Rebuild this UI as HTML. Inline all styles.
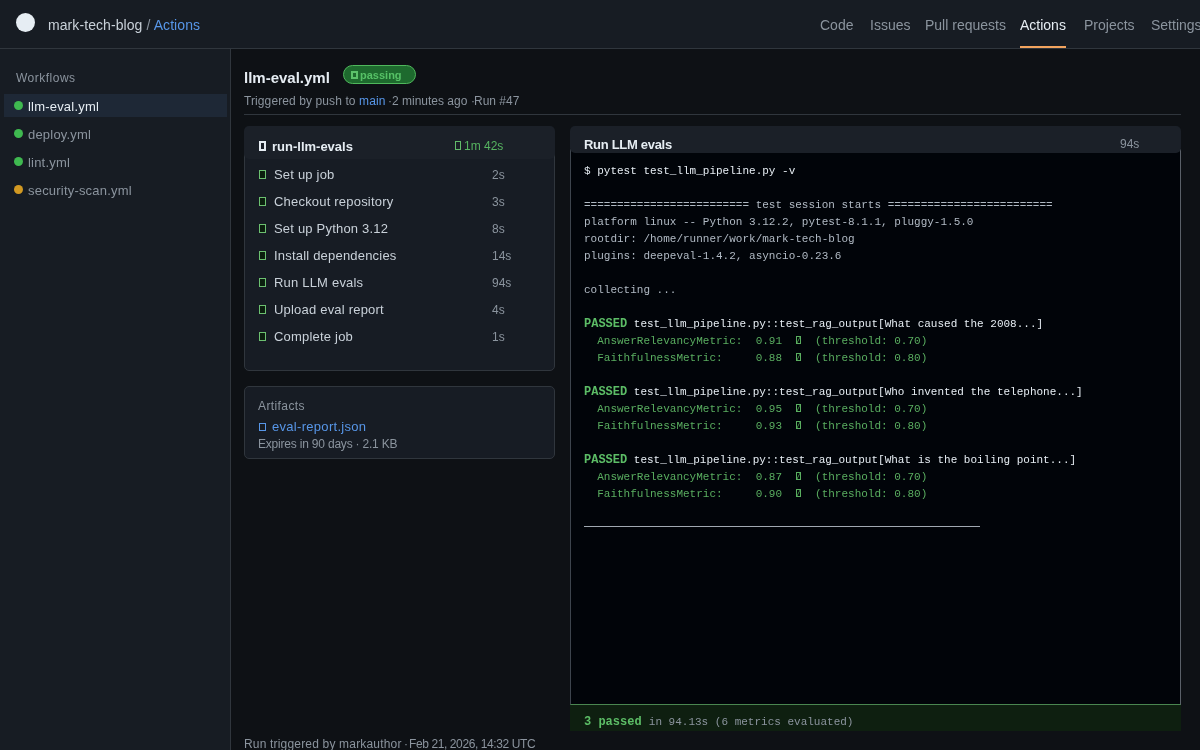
<!DOCTYPE html>
<html><head><meta charset="utf-8">
<style>
*{margin:0;padding:0;box-sizing:border-box}
html,body{width:1200px;height:750px;overflow:hidden;background:#0e1115;font-family:"Liberation Sans",sans-serif;color:#c9d1d9}
.hdr{position:absolute;left:0;top:0;width:1200px;height:49px;background:#171c23;border-bottom:1px solid #30363d}
.logo{position:absolute;left:16px;top:13px;width:19px;height:19px;border-radius:50%;background:#e6edf3}
.repo{position:absolute;left:48px;top:17px;font-size:14px;line-height:16px;color:#c9d1d9;white-space:nowrap;letter-spacing:0.08px}
.repo .s{color:#8b949e}
.repo .b{color:#5796e8}
.nav{position:absolute;top:17px;font-size:14px;line-height:16px;color:#8b949e;white-space:nowrap}
.nav.on{color:#e6edf3}
.uline{position:absolute;left:1020px;top:46px;width:46px;height:2px;background:#f2a35e}
.side{position:absolute;left:0;top:49px;width:231px;height:701px;background:#171c23;border-right:1px solid #30363d}
.wf{position:absolute;left:16px;top:22px;font-size:12px;line-height:14px;color:#8b949e;letter-spacing:0.5px}
.sel{position:absolute;left:4px;top:45px;width:223px;height:23px;background:#1e2836;border-radius:0}
.item{position:absolute;left:28px;margin-top:1px;font-size:13px;line-height:15px;color:#8b949e;white-space:nowrap;letter-spacing:0.2px}
.item.on{color:#e6edf3}
.dot{position:absolute;left:14px;width:9px;height:9px;border-radius:50%}
.g{background:#3fb950}.y{background:#d29922}
.title{position:absolute;left:244px;top:69px;font-size:15px;line-height:17px;font-weight:bold;color:#e6edf3;white-space:nowrap}
.badge{position:absolute;left:343px;top:65px;width:73px;height:19px;border-radius:10px;background:#1e6a2e;border:1px solid #4fb85c;color:#56c166;font-size:11px;font-weight:bold;line-height:17px;white-space:nowrap}
.sub{position:absolute;left:244px;top:94px;font-size:12px;line-height:14px;color:#8b949e;white-space:nowrap}
.hr{position:absolute;left:244px;top:114px;width:937px;height:1px;background:#30363d}
.card{position:absolute;background:#171c24;border:1px solid #30363d;border-radius:5px}
.chead{position:absolute;left:244px;top:126px;width:311px;height:33px;background:#1b2028;border-radius:5px}
.tofu{position:absolute;border:1px solid currentColor}
.jt{position:absolute;left:272px;top:139px;font-size:13px;line-height:15px;font-weight:bold;color:#e6edf3;white-space:nowrap}
.jd{position:absolute;left:464px;top:139px;font-size:12px;line-height:14px;color:#56b360;white-space:nowrap}
.step{position:absolute;left:274px;font-size:13px;line-height:15px;color:#c9d1d9;white-space:nowrap;letter-spacing:0.2px}
.dur{position:absolute;left:492px;font-size:12px;line-height:14px;color:#8b949e;white-space:nowrap}
.st{position:absolute;left:259px;width:7px;height:9px;border:1px solid #6cc070;background:#0b1f0e}
.term{position:absolute;left:570px;top:126px;width:611px;height:605px}
.thead{position:absolute;left:0;top:0;width:611px;height:27px;background:#1b2028;border-radius:5px;z-index:2}
.tbody{position:absolute;left:0;top:23px;width:611px;height:556px;background:#010409;border-left:1px solid #3d444d;border-right:1px solid #5a6068;border-bottom:1px solid #4a8650}
.tfoot{position:absolute;left:0;top:579px;width:611px;height:26px;background:#0e1f10}
.ttl{position:absolute;left:14px;top:11px;font-size:13px;line-height:15px;font-weight:bold;color:#e6edf3;white-space:nowrap;letter-spacing:-0.3px}
.tdur{position:absolute;left:550px;top:11px;font-size:12px;line-height:14px;color:#8b949e;white-space:nowrap}
.ln{position:absolute;left:13px;line-height:17px;font-family:"Liberation Mono",monospace;font-size:11px;white-space:pre;color:#b1bac4}
.ln.w{color:#e6edf3}
.ln.m{color:#5aae60}
.pb{font-weight:bold;color:#5cbd66;font-size:12px;line-height:0}
.tt{display:inline-block;width:6.6px;height:8px;position:relative;vertical-align:baseline}
.tt:before{content:"";position:absolute;left:1px;top:0;width:5px;height:8px;border:1px solid #5aae60;box-sizing:border-box;background:linear-gradient(to bottom right,transparent 35%,#2f6a35 45%,#2f6a35 55%,transparent 65%)}
.fl{position:absolute;left:14px;top:9px;line-height:17px;font-family:"Liberation Mono",monospace;font-size:11px;white-space:pre;color:#8b949e}
</style></head><body>
<div id="root" style="position:absolute;left:0;top:0;width:1200px;height:750px;will-change:transform">
<div class="hdr">
  <div class="logo"></div>
  <div class="repo">mark-tech-blog <span class="s">/</span> <span class="b">Actions</span></div>
  <div class="nav" style="left:820px">Code</div>
  <div class="nav" style="left:870px">Issues</div>
  <div class="nav" style="left:925px">Pull requests</div>
  <div class="nav on" style="left:1020px">Actions</div>
  <div class="nav" style="left:1084px">Projects</div>
  <div class="nav" style="left:1151px">Settings</div>
  <div class="uline"></div>
</div>
<div class="side">
  <div class="wf">Workflows</div>
  <div class="sel"></div>
  <div class="dot g" style="top:52px"></div><div class="item on" style="top:49px">llm-eval.yml</div>
  <div class="dot g" style="top:80px"></div><div class="item" style="top:77px">deploy.yml</div>
  <div class="dot g" style="top:108px"></div><div class="item" style="top:105px">lint.yml</div>
  <div class="dot y" style="top:136px"></div><div class="item" style="top:133px">security-scan.yml</div>
</div>
<div class="title">llm-eval.yml</div>
<div class="badge"><span class="tofu" style="left:7px;top:5px;width:7px;height:8px;border-width:2px;color:#5cc26a"></span><span style="position:absolute;left:16px;top:1px">passing</span></div>
<div class="sub" style="letter-spacing:0.1px">Triggered by push to <span style="color:#5796e8">main</span></div><div class="sub" style="left:388px">·</div><div class="sub" style="left:392px">2 minutes ago</div><div class="sub" style="left:471px">·</div><div class="sub" style="left:474px">Run #47</div>
<div class="hr"></div>

<div class="card" style="left:244px;top:150px;width:311px;height:221px"></div>
<div class="chead"></div>
<span class="tofu" style="left:259px;top:141px;width:7px;height:10px;border:2px solid #e6edf3"></span>
<div class="jt">run-llm-evals</div>
<span class="tofu" style="left:455px;top:141px;width:6px;height:9px;color:#62bb6a"></span>
<div class="jd">1m 42s</div>

<div class="st" style="top:170px"></div><div class="step" style="top:167px">Set up job</div><div class="dur" style="top:168px">2s</div>
<div class="st" style="top:197px"></div><div class="step" style="top:194px">Checkout repository</div><div class="dur" style="top:195px">3s</div>
<div class="st" style="top:224px"></div><div class="step" style="top:221px">Set up Python 3.12</div><div class="dur" style="top:222px">8s</div>
<div class="st" style="top:251px"></div><div class="step" style="top:248px">Install dependencies</div><div class="dur" style="top:249px">14s</div>
<div class="st" style="top:278px"></div><div class="step" style="top:275px">Run LLM evals</div><div class="dur" style="top:276px">94s</div>
<div class="st" style="top:305px"></div><div class="step" style="top:302px">Upload eval report</div><div class="dur" style="top:303px">4s</div>
<div class="st" style="top:332px"></div><div class="step" style="top:329px">Complete job</div><div class="dur" style="top:330px">1s</div>

<div class="card" style="left:244px;top:386px;width:311px;height:73px"></div>
<div class="sub" style="left:258px;top:399px;letter-spacing:0.4px">Artifacts</div>
<span class="tofu" style="left:259px;top:423px;width:7px;height:8px;color:#5796e8"></span>
<div class="step" style="left:272px;top:419px;color:#5796e8;letter-spacing:0.3px">eval-report.json</div>
<div class="sub" style="left:258px;top:437px;letter-spacing:-0.2px">Expires in 90 days · 2.1 KB</div>

<div class="term">
  <div class="thead"><div class="ttl">Run LLM evals</div><div class="tdur">94s</div></div>
  <div class="tbody">
<div class="ln w" style="top:14px">$ pytest test_llm_pipeline.py -v</div>
<div class="ln gr" style="top:48px">========================= test session starts =========================</div>
<div class="ln gr" style="top:65px">platform linux -- Python 3.12.2, pytest-8.1.1, pluggy-1.5.0</div>
<div class="ln gr" style="top:82px">rootdir: /home/runner/work/mark-tech-blog</div>
<div class="ln gr" style="top:99px">plugins: deepeval-1.4.2, asyncio-0.23.6</div>
<div class="ln gr" style="top:133px">collecting ...</div>
<div class="ln w" style="top:167px"><span class="pb">PASSED</span> test_llm_pipeline.py::test_rag_output[What caused the 2008...]</div>
<div class="ln m" style="top:184px">  AnswerRelevancyMetric:  0.91  <span class="tt"></span>  (threshold: 0.70)</div>
<div class="ln m" style="top:201px">  FaithfulnessMetric:     0.88  <span class="tt"></span>  (threshold: 0.80)</div>
<div class="ln w" style="top:235px"><span class="pb">PASSED</span> test_llm_pipeline.py::test_rag_output[Who invented the telephone...]</div>
<div class="ln m" style="top:252px">  AnswerRelevancyMetric:  0.95  <span class="tt"></span>  (threshold: 0.70)</div>
<div class="ln m" style="top:269px">  FaithfulnessMetric:     0.93  <span class="tt"></span>  (threshold: 0.80)</div>
<div class="ln w" style="top:303px"><span class="pb">PASSED</span> test_llm_pipeline.py::test_rag_output[What is the boiling point...]</div>
<div class="ln m" style="top:320px">  AnswerRelevancyMetric:  0.87  <span class="tt"></span>  (threshold: 0.70)</div>
<div class="ln m" style="top:337px">  FaithfulnessMetric:     0.90  <span class="tt"></span>  (threshold: 0.80)</div>
<div style="position:absolute;left:13px;top:377px;width:396px;height:1px;background:#a0a8b0"></div>
  </div>
  <div class="tfoot"><div class="fl"><span class="pb">3 passed </span>in 94.13s (6 metrics evaluated)</div></div>
</div>

<div class="sub" id="b1" style="top:737px;letter-spacing:0.18px">Run triggered by markauthor</div><div class="sub" style="top:737px;left:404px">·</div><div class="sub" id="b2" style="top:737px;left:409px;letter-spacing:-0.4px">Feb 21, 2026, 14:32 UTC</div>
</div>
</body></html>
